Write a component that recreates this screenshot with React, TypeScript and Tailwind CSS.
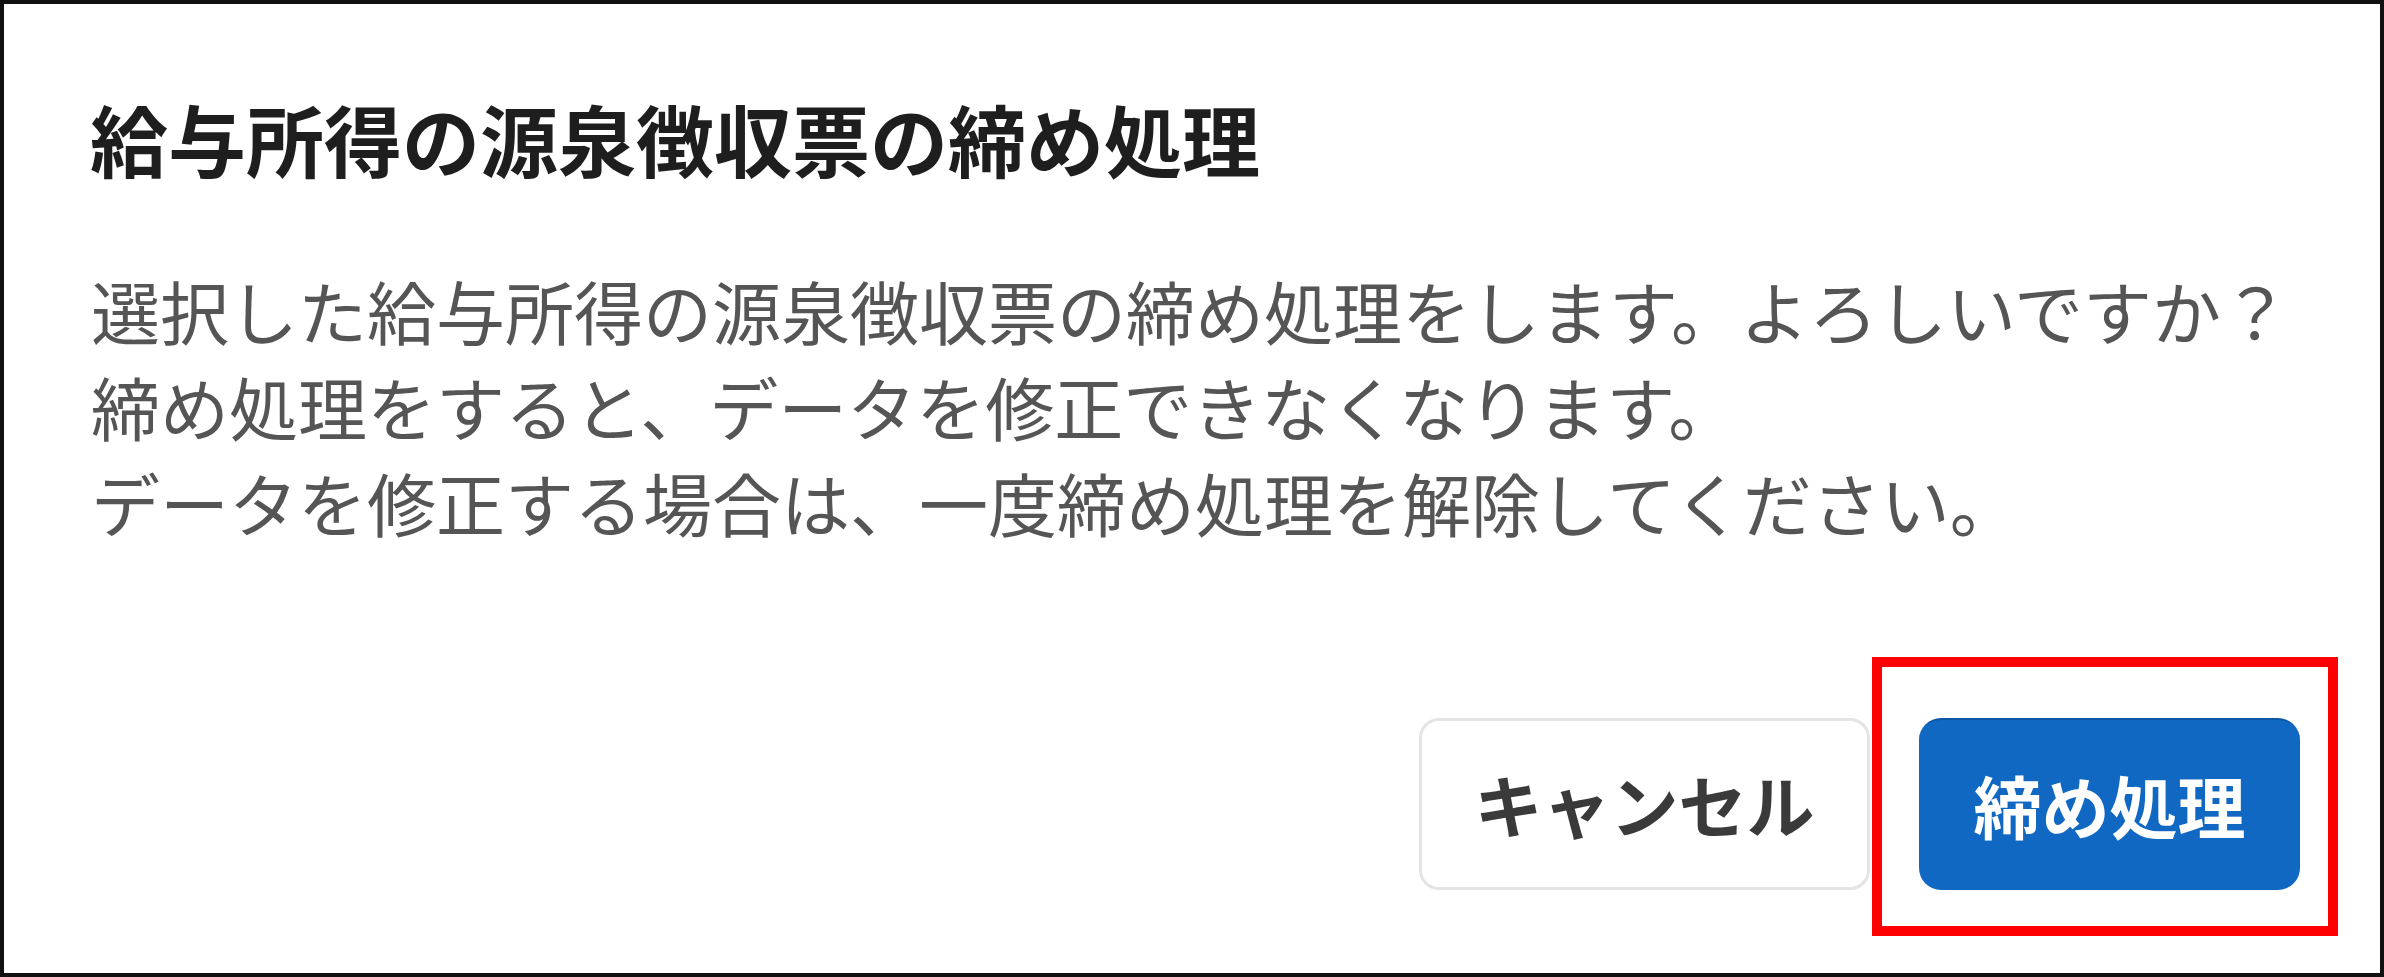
import React from 'react';

const FONT = '"Noto Sans CJK JP", "Noto Sans", sans-serif';

export default function App() {
  return (
    <div
      className="w-[2384px] h-[977px] border-4 border-[#111] bg-white flex flex-col pl-[86px] pr-[80px] pt-[87px] pb-[83px]"
      style={{ fontFamily: FONT }}
    >
      <h1 className="text-[78px] leading-[94px] font-bold text-[#1e1e1e] whitespace-nowrap">
        給与所得の源泉徴収票の締め処理
      </h1>

      <div className="mt-[77px] text-[69px] leading-[96px] text-[#555] whitespace-nowrap pl-[1px]">
        <p>選択した給与所得の源泉徴収票の締め処理をします。よろしいですか？</p>
        <p>締め処理をすると、データを修正できなくなります。</p>
        <p>データを修正する場合は、一度締め処理を解除してください。</p>
      </div>

      <div className="mt-auto flex justify-end items-center gap-[49px]">
        <button className="h-[172px] w-[451px] rounded-[20px] border-[3px] border-[#e4e4e4] bg-white text-[68px] font-bold text-[#3a3a3a] flex items-center justify-center">
          キャンセル
        </button>
        <div className="relative">
          <button className="h-[172px] w-[381px] rounded-[22px] bg-[#1068c3] border-t-2 border-[#0c57a6] text-[68px] font-bold text-white flex items-center justify-center">
            締め処理
          </button>
          <div className="absolute left-[-47px] top-[-61px] right-[-38px] bottom-[-46px] border-[10px] border-[#ff0000] pointer-events-none" />
        </div>
      </div>
    </div>
  );
}
